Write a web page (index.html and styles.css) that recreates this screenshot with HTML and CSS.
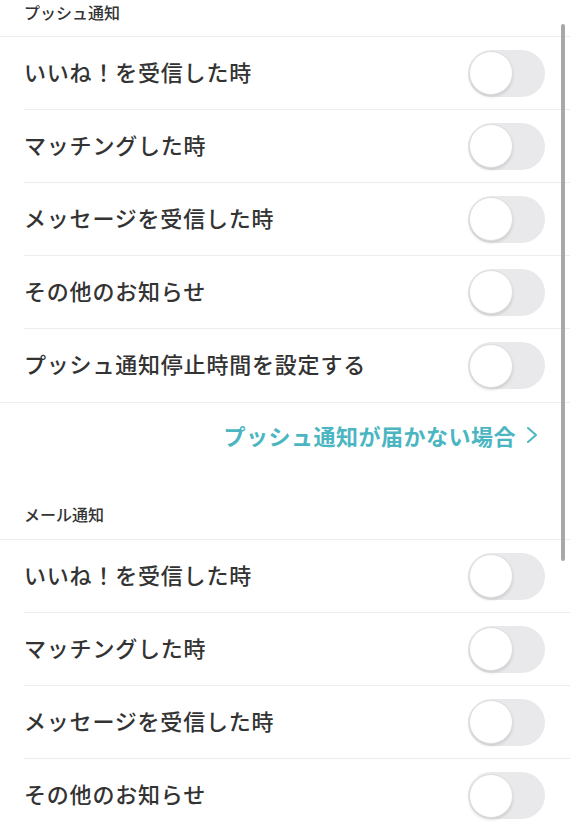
FILE: index.html
```html
<!DOCTYPE html>
<html lang="ja">
<head>
<meta charset="utf-8">
<link rel="stylesheet" href="styles.css">
</head>
<body>
<div class="page">
  <section class="section">
    <div class="section-header section-header--first">プッシュ通知</div>
    <ul class="list">
      <li class="row"><span class="label">いいね！を受信した時</span><span class="toggle"><span class="knob"></span></span></li>
      <li class="row"><span class="label">マッチングした時</span><span class="toggle"><span class="knob"></span></span></li>
      <li class="row"><span class="label">メッセージを受信した時</span><span class="toggle"><span class="knob"></span></span></li>
      <li class="row"><span class="label">その他のお知らせ</span><span class="toggle"><span class="knob"></span></span></li>
      <li class="row"><span class="label">プッシュ通知停止時間を設定する</span><span class="toggle"><span class="knob"></span></span></li>
    </ul>
    <div class="help">
      <a class="help-link">プッシュ通知が届かない場合<svg class="chev" width="12" height="20" viewBox="0 0 12 20"><polyline points="2,3 10,10 2,17" fill="none" stroke="#4bb6c2" stroke-width="2" stroke-linecap="round" stroke-linejoin="round"/></svg></a>
    </div>
  </section>
  <section class="section">
    <div class="section-header">メール通知</div>
    <ul class="list">
      <li class="row"><span class="label">いいね！を受信した時</span><span class="toggle"><span class="knob"></span></span></li>
      <li class="row"><span class="label">マッチングした時</span><span class="toggle"><span class="knob"></span></span></li>
      <li class="row"><span class="label">メッセージを受信した時</span><span class="toggle"><span class="knob"></span></span></li>
      <li class="row"><span class="label">その他のお知らせ</span><span class="toggle"><span class="knob"></span></span></li>
    </ul>
  </section>
</div>
<div class="scrollbar"></div>
</body>
</html>
```

FILE: styles.css
```css
html, body {
  margin: 0;
  padding: 0;
  background: #fff;
  overflow: hidden;
}
body {
  font-family: "Noto Sans CJK JP", "Noto Sans", sans-serif;
  color: #333;
}
.page {
  width: 570px;
}
.section-header {
  height: 46px;
  box-sizing: border-box;
  padding: 10px 24px 0;
  font-size: 16px;
  line-height: 20px;
  font-weight: 500;
  color: #333;
  border-bottom: 1px solid #ececec;
}
.section-header--first {
  height: 37px;
  padding-top: 2px;
}
.list {
  list-style: none;
  margin: 0;
  padding: 0;
  border-bottom: 1px solid #ececec;
}
.row {
  height: 73px;
  box-sizing: border-box;
  margin-left: 24px;
  padding-right: 25px;
  display: flex;
  align-items: center;
  justify-content: space-between;
  border-bottom: 1px solid #ececec;
}
.row:last-child {
  border-bottom: none;
}
.label {
  font-size: 22px;
  line-height: 30px;
  margin-top: -5px;
  letter-spacing: 0.8px;
  font-weight: 500;
  color: #333;
}
.toggle {
  width: 77px;
  height: 47px;
  border-radius: 24px;
  background: #e9e9eb;
  display: flex;
  align-items: center;
  padding-left: 1px;
  box-sizing: border-box;
}
.knob {
  width: 44px;
  height: 44px;
  border-radius: 50%;
  background: #fff;
  box-sizing: border-box;
  border: 1px solid #dedede;
  box-shadow: 0 2px 3px rgba(0, 0, 0, 0.12);
}
.help {
  height: 91px;
  box-sizing: border-box;
  padding: 18px 32px 0 0;
  display: flex;
  align-items: flex-start;
  justify-content: flex-end;
}
.help-link {
  display: flex;
  align-items: center;
  gap: 10px;
  font-size: 22px;
  line-height: 28px;
  letter-spacing: 0.5px;
  font-weight: 700;
  color: #4bb6c2;
}
.chev {
  display: block;
}
.scrollbar {
  position: fixed;
  top: 24px;
  right: 5px;
  width: 4px;
  height: 537px;
  border-radius: 2px;
  background: #a8a8a8;
}
```
